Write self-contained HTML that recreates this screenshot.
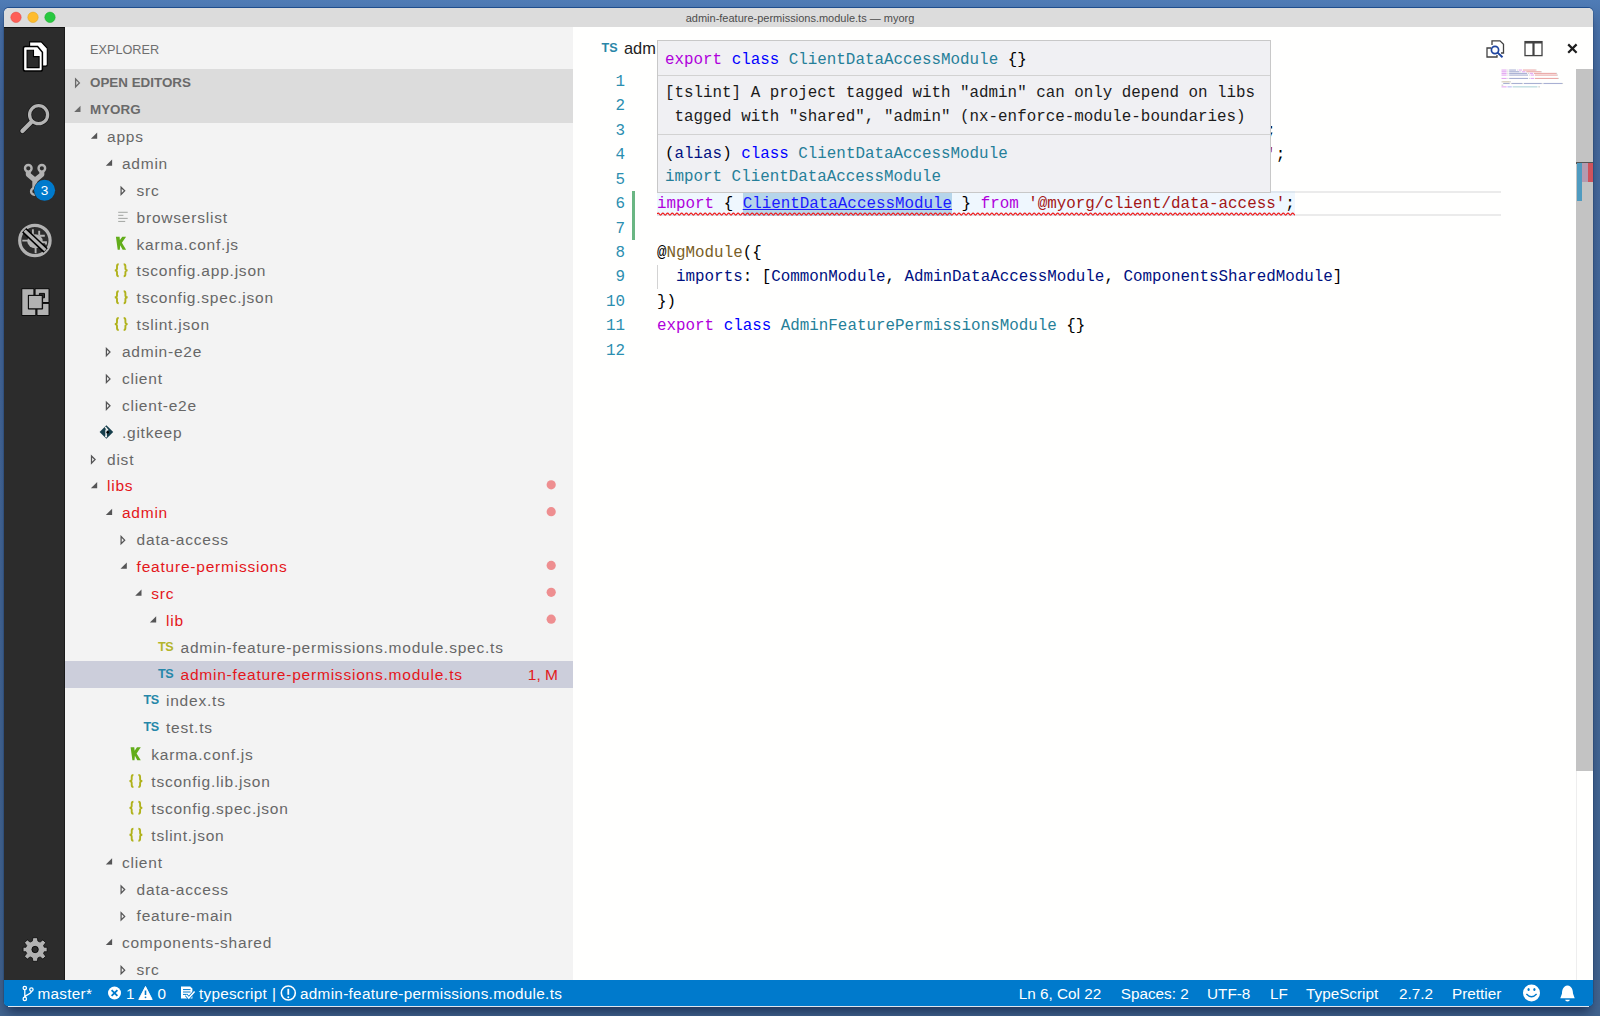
<!DOCTYPE html>
<html><head><meta charset="utf-8">
<style>
*{box-sizing:border-box;margin:0;padding:0}
html,body{width:1600px;height:1016px;overflow:hidden}
body{position:relative;background:linear-gradient(180deg,#4f7cb6 0%,#4a74ac 1.5%,#45699c 10%,#436796 60%,#41648f 100%);font-family:"Liberation Sans",sans-serif}
.abs{position:absolute}
#win{position:absolute;left:4px;top:8px;width:1589px;height:998px;border-radius:5px;overflow:hidden;background:#fff;box-shadow:0 -1px 0 0 rgba(10,60,130,.6),0 0 0 1px rgba(20,50,90,.22),0 9px 12px -3px rgba(0,10,40,.55)}
#title{position:absolute;left:4px;top:8px;width:1589px;height:19px;background:#dcdcdc;border-radius:5px 5px 0 0}
#titletxt{position:absolute;left:0;top:8.8px;width:1600px;height:19px;line-height:19px;text-align:center;font-size:11px;color:#4d4d4d}
#act{position:absolute;left:4px;top:27px;width:61px;height:953px;background:#2c2c2c;border-top:1px solid #111;border-right:1px solid #1a1a1a}
#side{position:absolute;left:65px;top:27px;width:508px;height:953px;background:#f3f3f3}
#editor{position:absolute;left:573px;top:27px;width:1020px;height:953px;background:#fffffe}
#status{position:absolute;left:4px;top:980px;width:1589px;height:26px;background:#007acc;border-radius:0 0 4px 4px}
.hdr{position:absolute;left:65px;width:508px;height:27px;background:#dcdcdc}
.hdrtxt{position:absolute;left:90px;height:27px;line-height:27px;font-size:13.4px;font-weight:700;color:#6a6a6a}
.lbl{position:absolute;height:27px;line-height:27px;font-size:15.5px;letter-spacing:0.78px;color:#676767;white-space:pre}
.lbl.red{color:#e4161b}
.deco{position:absolute;left:500px;width:58px;text-align:right;height:27px;line-height:27px;font-size:15.5px;color:#e21b1b}
.sel{position:absolute;left:65px;width:508px;height:27px;background:#cccedb}
.jsn{position:absolute;height:27px;line-height:27px;font-size:14.5px;font-family:"Liberation Mono",monospace;font-weight:700;color:#b6b62f;letter-spacing:-1.8px}
.ts{position:absolute;height:27px;line-height:26px;font-size:12.6px;font-weight:700;letter-spacing:-0.3px}
#svg{position:absolute;left:0;top:0}
.code{position:absolute;font-family:"Liberation Mono",monospace;font-size:15.87px;white-space:pre;height:24px;line-height:24px;color:#000}
.ln{position:absolute;left:573px;width:52px;text-align:right;font-family:"Liberation Mono",monospace;font-size:15.87px;height:24px;line-height:24px;color:#2b8eb0}
.lnk{color:#1a1aff;text-decoration:underline;text-underline-offset:0.6px;text-decoration-thickness:1.3px}
.dk{color:#1b1b1b}
.k{color:#af00db}.b{color:#0000ff}.t{color:#267f99}.s{color:#a31515}.v{color:#001080}.f{color:#795e26}
.st{position:absolute;top:980px;height:26px;line-height:26px;font-size:15.3px;color:#fff;white-space:pre}
</style></head><body>
<div id="win"></div>
<div id="title"></div>
<div id="titletxt">admin-feature-permissions.module.ts — myorg</div>
<div id="act"></div>
<div id="side"></div>
<div id="editor"></div>
<div id="status"></div>
<div class="abs" style="left:8px;top:1006px;width:1581px;height:1px;background:#dfe6f0"></div>

<!-- sidebar -->
<div class="abs" style="left:90px;top:37px;height:27px;line-height:27px;font-size:12.7px;color:#6f6f6f">EXPLORER</div>
<div class="hdr" style="top:69px"></div>
<div class="hdr" style="top:96px"></div>
<div class="hdrtxt" style="top:69px">OPEN EDITORS</div>
<div class="hdrtxt" style="top:96px">MYORG</div>
<div class="lbl" style="left:107.00px;top:123.00px">apps</div>
<div class="lbl" style="left:121.90px;top:149.88px">admin</div>
<div class="lbl" style="left:136.60px;top:176.75px">src</div>
<div class="lbl" style="left:136.60px;top:203.62px">browserslist</div>
<div class="lbl" style="left:136.60px;top:230.50px">karma.conf.js</div>
<div class="lbl" style="left:136.60px;top:257.38px">tsconfig.app.json</div>
<div class="lbl" style="left:136.60px;top:284.25px">tsconfig.spec.json</div>
<div class="lbl" style="left:136.60px;top:311.12px">tslint.json</div>
<div class="lbl" style="left:121.90px;top:338.00px">admin-e2e</div>
<div class="lbl" style="left:121.90px;top:364.88px">client</div>
<div class="lbl" style="left:121.90px;top:391.75px">client-e2e</div>
<div class="lbl" style="left:121.90px;top:418.62px">.gitkeep</div>
<div class="lbl" style="left:107.00px;top:445.50px">dist</div>
<div class="lbl red" style="left:107.00px;top:472.38px">libs</div>
<div class="lbl red" style="left:121.90px;top:499.25px">admin</div>
<div class="lbl" style="left:136.60px;top:526.12px">data-access</div>
<div class="lbl red" style="left:136.60px;top:553.00px">feature-permissions</div>
<div class="lbl red" style="left:151.30px;top:579.88px">src</div>
<div class="lbl red" style="left:166.00px;top:606.75px">lib</div>
<div class="lbl" style="left:180.50px;top:633.62px">admin-feature-permissions.module.spec.ts</div>
<div class="ts" style="left:157.90px;top:633.62px;color:#b3b52a">TS</div>
<div class="sel" style="top:660.80px"></div>
<div class="lbl red" style="left:180.50px;top:660.50px">admin-feature-permissions.module.ts</div>
<div class="deco" style="top:660.50px">1, M</div>
<div class="ts" style="left:157.90px;top:660.50px;color:#2687a9">TS</div>
<div class="lbl" style="left:166.00px;top:687.38px">index.ts</div>
<div class="ts" style="left:143.40px;top:687.38px;color:#2687a9">TS</div>
<div class="lbl" style="left:166.00px;top:714.25px">test.ts</div>
<div class="ts" style="left:143.40px;top:714.25px;color:#2687a9">TS</div>
<div class="lbl" style="left:151.30px;top:741.12px">karma.conf.js</div>
<div class="lbl" style="left:151.30px;top:768.00px">tsconfig.lib.json</div>
<div class="lbl" style="left:151.30px;top:794.88px">tsconfig.spec.json</div>
<div class="lbl" style="left:151.30px;top:821.75px">tslint.json</div>
<div class="lbl" style="left:121.90px;top:848.62px">client</div>
<div class="lbl" style="left:136.60px;top:875.50px">data-access</div>
<div class="lbl" style="left:136.60px;top:902.38px">feature-main</div>
<div class="lbl" style="left:121.90px;top:929.25px">components-shared</div>
<div class="lbl" style="left:136.60px;top:956.12px">src</div>

<!-- editor -->
<div class="abs" style="left:657px;top:191.25px;width:844px;height:24.45px;border-top:2.4px solid #ebebeb;border-bottom:2.4px solid #ebebeb"></div>
<div class="abs" style="left:657px;top:191.25px;width:637.97px;height:24.45px;background:rgba(173,214,255,0.2)"></div>
<div class="abs" style="left:742.70px;top:193.45px;width:209.48px;height:22.25px;background:#b6d5ea"></div>
<div class="abs" style="left:632px;top:191.25px;width:3px;height:48.40px;background:#6ab683"></div>
<div class="abs" style="left:657px;top:264.60px;width:1px;height:24.45px;background:#d3d3d3"></div>
<div class="ln" style="top:69.80px">1</div>
<div class="ln" style="top:94.25px">2</div>
<div class="ln" style="top:118.70px">3</div>
<div class="ln" style="top:143.15px">4</div>
<div class="ln" style="top:167.60px">5</div>
<div class="ln" style="top:192.05px">6</div>
<div class="ln" style="top:216.50px">7</div>
<div class="ln" style="top:240.95px">8</div>
<div class="ln" style="top:265.40px">9</div>
<div class="ln" style="top:289.85px">10</div>
<div class="ln" style="top:314.30px">11</div>
<div class="ln" style="top:338.75px">12</div>
<div class="code" style="left:657.0px;top:69.80px"><span class="k">import</span> { <span class="v">NgModule</span> } <span class="k">from</span> <span class="s">'@angular/core'</span>;</div>
<div class="code" style="left:657.0px;top:94.25px"><span class="k">import</span> { <span class="v">CommonModule</span> } <span class="k">from</span> <span class="s">'@angular/common'</span>;</div>
<div class="code" style="left:657.0px;top:118.70px"><span class="k">import</span> { <span class="v">AdminDataAccessModule</span> } <span class="k">from</span> <span class="s">'@myorg/admin/data-access'</span>;</div>
<div class="code" style="left:657.0px;top:143.15px"><span class="k">import</span> { <span class="v">ComponentsSharedModule</span> } <span class="k">from</span> <span class="s">'@myorg/components-shared'</span>;</div>
<div class="code" style="left:657.0px;top:192.05px"><span class="k">import</span> { <span class="lnk">ClientDataAccessModule</span> } <span class="k">from</span> <span class="s">'@myorg/client/data-access'</span>;</div>
<div class="code" style="left:657.0px;top:240.95px">@<span class="f">NgModule</span>({</div>
<div class="code" style="left:657.0px;top:265.40px">  <span class="v">imports</span>: [<span class="v">CommonModule</span>, <span class="v">AdminDataAccessModule</span>, <span class="v">ComponentsSharedModule</span>]</div>
<div class="code" style="left:657.0px;top:289.85px">})</div>
<div class="code" style="left:657.0px;top:314.30px"><span class="k">export</span> <span class="b">class</span> <span class="t">AdminFeaturePermissionsModule</span> {}</div>
<svg class="abs" style="left:657px;top:211.30px" width="638.0" height="6" viewBox="0 0 638.0 6"><path d="M0,3 Q1.18,1 2.35,3 Q3.53,5 4.70,3 Q5.88,1 7.05,3 Q8.23,5 9.40,3 Q10.58,1 11.75,3 Q12.93,5 14.10,3 Q15.28,1 16.45,3 Q17.62,5 18.80,3 Q19.98,1 21.15,3 Q22.33,5 23.50,3 Q24.68,1 25.85,3 Q27.02,5 28.20,3 Q29.38,1 30.55,3 Q31.73,5 32.90,3 Q34.07,1 35.25,3 Q36.42,5 37.60,3 Q38.77,1 39.95,3 Q41.12,5 42.30,3 Q43.48,1 44.65,3 Q45.83,5 47.00,3 Q48.18,1 49.35,3 Q50.53,5 51.70,3 Q52.88,1 54.05,3 Q55.23,5 56.40,3 Q57.58,1 58.75,3 Q59.93,5 61.10,3 Q62.28,1 63.45,3 Q64.63,5 65.80,3 Q66.98,1 68.15,3 Q69.33,5 70.50,3 Q71.68,1 72.85,3 Q74.03,5 75.20,3 Q76.38,1 77.55,3 Q78.73,5 79.90,3 Q81.08,1 82.25,3 Q83.43,5 84.60,3 Q85.78,1 86.95,3 Q88.13,5 89.30,3 Q90.48,1 91.65,3 Q92.83,5 94.00,3 Q95.18,1 96.35,3 Q97.53,5 98.70,3 Q99.88,1 101.05,3 Q102.23,5 103.40,3 Q104.58,1 105.75,3 Q106.93,5 108.10,3 Q109.28,1 110.45,3 Q111.63,5 112.80,3 Q113.98,1 115.15,3 Q116.33,5 117.50,3 Q118.68,1 119.85,3 Q121.03,5 122.20,3 Q123.38,1 124.55,3 Q125.73,5 126.90,3 Q128.08,1 129.25,3 Q130.43,5 131.60,3 Q132.78,1 133.95,3 Q135.13,5 136.30,3 Q137.48,1 138.65,3 Q139.83,5 141.00,3 Q142.18,1 143.35,3 Q144.53,5 145.70,3 Q146.88,1 148.05,3 Q149.23,5 150.40,3 Q151.58,1 152.75,3 Q153.93,5 155.10,3 Q156.28,1 157.45,3 Q158.62,5 159.80,3 Q160.97,1 162.15,3 Q163.32,5 164.50,3 Q165.67,1 166.85,3 Q168.02,5 169.20,3 Q170.37,1 171.55,3 Q172.72,5 173.90,3 Q175.07,1 176.25,3 Q177.42,5 178.60,3 Q179.77,1 180.95,3 Q182.12,5 183.30,3 Q184.47,1 185.65,3 Q186.82,5 188.00,3 Q189.17,1 190.35,3 Q191.52,5 192.70,3 Q193.87,1 195.05,3 Q196.22,5 197.40,3 Q198.57,1 199.75,3 Q200.92,5 202.10,3 Q203.27,1 204.45,3 Q205.62,5 206.80,3 Q207.97,1 209.15,3 Q210.32,5 211.50,3 Q212.67,1 213.85,3 Q215.02,5 216.20,3 Q217.37,1 218.55,3 Q219.72,5 220.90,3 Q222.07,1 223.25,3 Q224.42,5 225.60,3 Q226.77,1 227.95,3 Q229.12,5 230.30,3 Q231.47,1 232.65,3 Q233.82,5 235.00,3 Q236.17,1 237.35,3 Q238.52,5 239.70,3 Q240.87,1 242.05,3 Q243.22,5 244.40,3 Q245.57,1 246.75,3 Q247.92,5 249.10,3 Q250.27,1 251.45,3 Q252.62,5 253.80,3 Q254.97,1 256.15,3 Q257.32,5 258.50,3 Q259.67,1 260.85,3 Q262.02,5 263.20,3 Q264.37,1 265.55,3 Q266.72,5 267.90,3 Q269.07,1 270.25,3 Q271.42,5 272.60,3 Q273.77,1 274.95,3 Q276.12,5 277.30,3 Q278.47,1 279.65,3 Q280.82,5 282.00,3 Q283.17,1 284.35,3 Q285.52,5 286.70,3 Q287.87,1 289.05,3 Q290.22,5 291.40,3 Q292.57,1 293.75,3 Q294.92,5 296.10,3 Q297.27,1 298.45,3 Q299.62,5 300.80,3 Q301.97,1 303.15,3 Q304.32,5 305.50,3 Q306.67,1 307.85,3 Q309.02,5 310.20,3 Q311.37,1 312.55,3 Q313.72,5 314.90,3 Q316.07,1 317.25,3 Q318.42,5 319.60,3 Q320.77,1 321.95,3 Q323.12,5 324.30,3 Q325.47,1 326.65,3 Q327.82,5 329.00,3 Q330.17,1 331.35,3 Q332.52,5 333.70,3 Q334.87,1 336.05,3 Q337.22,5 338.40,3 Q339.57,1 340.75,3 Q341.92,5 343.10,3 Q344.27,1 345.45,3 Q346.62,5 347.80,3 Q348.97,1 350.15,3 Q351.32,5 352.50,3 Q353.67,1 354.85,3 Q356.02,5 357.20,3 Q358.37,1 359.55,3 Q360.72,5 361.90,3 Q363.07,1 364.25,3 Q365.42,5 366.60,3 Q367.77,1 368.95,3 Q370.12,5 371.30,3 Q372.47,1 373.65,3 Q374.82,5 376.00,3 Q377.17,1 378.35,3 Q379.52,5 380.70,3 Q381.87,1 383.05,3 Q384.22,5 385.40,3 Q386.57,1 387.75,3 Q388.92,5 390.10,3 Q391.27,1 392.45,3 Q393.62,5 394.80,3 Q395.97,1 397.15,3 Q398.32,5 399.50,3 Q400.67,1 401.85,3 Q403.02,5 404.20,3 Q405.37,1 406.55,3 Q407.72,5 408.90,3 Q410.07,1 411.25,3 Q412.42,5 413.60,3 Q414.77,1 415.95,3 Q417.12,5 418.30,3 Q419.47,1 420.65,3 Q421.82,5 423.00,3 Q424.17,1 425.35,3 Q426.52,5 427.70,3 Q428.87,1 430.05,3 Q431.22,5 432.40,3 Q433.57,1 434.75,3 Q435.92,5 437.10,3 Q438.27,1 439.45,3 Q440.62,5 441.80,3 Q442.97,1 444.15,3 Q445.32,5 446.50,3 Q447.67,1 448.85,3 Q450.02,5 451.20,3 Q452.37,1 453.55,3 Q454.72,5 455.90,3 Q457.07,1 458.25,3 Q459.42,5 460.60,3 Q461.77,1 462.95,3 Q464.12,5 465.30,3 Q466.47,1 467.65,3 Q468.82,5 470.00,3 Q471.17,1 472.35,3 Q473.52,5 474.70,3 Q475.87,1 477.05,3 Q478.22,5 479.40,3 Q480.57,1 481.75,3 Q482.92,5 484.10,3 Q485.27,1 486.45,3 Q487.62,5 488.80,3 Q489.97,1 491.15,3 Q492.32,5 493.50,3 Q494.67,1 495.85,3 Q497.02,5 498.20,3 Q499.37,1 500.55,3 Q501.72,5 502.90,3 Q504.07,1 505.25,3 Q506.42,5 507.60,3 Q508.77,1 509.95,3 Q511.12,5 512.30,3 Q513.47,1 514.65,3 Q515.82,5 517.00,3 Q518.17,1 519.35,3 Q520.52,5 521.70,3 Q522.87,1 524.05,3 Q525.22,5 526.40,3 Q527.57,1 528.75,3 Q529.92,5 531.10,3 Q532.27,1 533.45,3 Q534.62,5 535.80,3 Q536.97,1 538.15,3 Q539.32,5 540.50,3 Q541.67,1 542.85,3 Q544.02,5 545.20,3 Q546.37,1 547.55,3 Q548.72,5 549.90,3 Q551.07,1 552.25,3 Q553.42,5 554.60,3 Q555.77,1 556.95,3 Q558.12,5 559.30,3 Q560.47,1 561.65,3 Q562.82,5 564.00,3 Q565.17,1 566.35,3 Q567.52,5 568.70,3 Q569.87,1 571.05,3 Q572.22,5 573.40,3 Q574.57,1 575.75,3 Q576.92,5 578.10,3 Q579.27,1 580.45,3 Q581.62,5 582.80,3 Q583.97,1 585.15,3 Q586.32,5 587.50,3 Q588.67,1 589.85,3 Q591.02,5 592.20,3 Q593.37,1 594.55,3 Q595.72,5 596.90,3 Q598.07,1 599.25,3 Q600.42,5 601.60,3 Q602.77,1 603.95,3 Q605.12,5 606.30,3 Q607.48,1 608.65,3 Q609.83,5 611.00,3 Q612.18,1 613.35,3 Q614.53,5 615.70,3 Q616.88,1 618.05,3 Q619.23,5 620.40,3 Q621.58,1 622.75,3 Q623.93,5 625.10,3 Q626.28,1 627.45,3 Q628.63,5 629.80,3 Q630.98,1 632.15,3 Q633.33,5 634.50,3 Q635.68,1 636.85,3 Q638.03,5 639.20,3" fill="none" stroke="#f01c1c" stroke-width="1.25"/></svg>
<div class="abs" style="left:657px;top:40px;width:614px;height:153px;background:#f0f0f3;border:1px solid #c8c8c8"></div>
<div class="abs" style="left:658px;top:75px;width:612px;height:1px;background:#d2d2d2"></div>
<div class="abs" style="left:658px;top:134px;width:612px;height:1px;background:#d2d2d2"></div>
<div class="code" style="left:665px;top:48.20px"><span class="k">export</span> <span class="b">class</span> <span class="t">ClientDataAccessModule</span> {}</div>
<div class="code" style="left:665px;top:81.40px"><span class="dk">[tslint] A project tagged with "admin" can only depend on libs</span></div>
<div class="code" style="left:665px;top:105.40px"><span class="dk"> tagged with "shared", "admin" (nx-enforce-module-boundaries)</span></div>
<div class="code" style="left:665px;top:141.80px">(<span class="v">alias</span>) <span class="b">class</span> <span class="t">ClientDataAccessModule</span></div>
<div class="code" style="left:665px;top:165.00px"><span class="t">import ClientDataAccessModule</span></div>
<div class="abs" style="left:601.5px;top:38px;height:20px;line-height:20px;font-size:12.6px;font-weight:700;color:#2a86a8">TS</div>
<div class="abs" style="left:624px;top:38px;height:20px;line-height:20px;font-size:16.4px;color:#222">adm</div>
<div class="abs" style="left:1576px;top:69px;width:17px;height:702px;background:#c3c3c3"></div>
<div class="abs" style="left:1576px;top:771px;width:1px;height:209px;background:#eeeeee"></div>
<div class="abs" style="left:1576px;top:162px;width:17px;height:1.5px;background:#555"></div>
<div class="abs" style="left:1577px;top:163px;width:5px;height:38px;background:#4f9bc0"></div>
<div class="abs" style="left:1582px;top:163px;width:6px;height:19px;background:#b49bb0"></div>
<div class="abs" style="left:1588px;top:163px;width:5px;height:19px;background:#d0535c"></div>
<svg class="abs" style="left:0;top:0" width="1600" height="120"><rect x="1501.50" y="69.50" width="5.13" height="1.1" fill="#c040e0" opacity="0.45"/><rect x="1507.48" y="69.50" width="0.85" height="1.1" fill="#909090" opacity="0.45"/><rect x="1509.19" y="69.50" width="6.84" height="1.1" fill="#4050a0" opacity="0.45"/><rect x="1516.89" y="69.50" width="0.85" height="1.1" fill="#909090" opacity="0.45"/><rect x="1518.60" y="69.50" width="3.42" height="1.1" fill="#c040e0" opacity="0.45"/><rect x="1522.88" y="69.50" width="12.82" height="1.1" fill="#d04040" opacity="0.45"/><rect x="1535.70" y="69.50" width="0.85" height="1.1" fill="#909090" opacity="0.45"/><rect x="1501.50" y="71.18" width="5.13" height="1.1" fill="#c040e0" opacity="0.45"/><rect x="1507.48" y="71.18" width="0.85" height="1.1" fill="#909090" opacity="0.45"/><rect x="1509.19" y="71.18" width="10.26" height="1.1" fill="#4050a0" opacity="0.45"/><rect x="1520.31" y="71.18" width="0.85" height="1.1" fill="#909090" opacity="0.45"/><rect x="1522.02" y="71.18" width="3.42" height="1.1" fill="#c040e0" opacity="0.45"/><rect x="1526.30" y="71.18" width="14.54" height="1.1" fill="#d04040" opacity="0.45"/><rect x="1540.83" y="71.18" width="0.85" height="1.1" fill="#909090" opacity="0.45"/><rect x="1501.50" y="72.86" width="5.13" height="1.1" fill="#c040e0" opacity="0.45"/><rect x="1507.48" y="72.86" width="0.85" height="1.1" fill="#909090" opacity="0.45"/><rect x="1509.19" y="72.86" width="17.95" height="1.1" fill="#4050a0" opacity="0.45"/><rect x="1528.01" y="72.86" width="0.85" height="1.1" fill="#909090" opacity="0.45"/><rect x="1529.71" y="72.86" width="3.42" height="1.1" fill="#c040e0" opacity="0.45"/><rect x="1533.99" y="72.86" width="22.23" height="1.1" fill="#d04040" opacity="0.45"/><rect x="1556.22" y="72.86" width="0.85" height="1.1" fill="#909090" opacity="0.45"/><rect x="1501.50" y="74.54" width="5.13" height="1.1" fill="#c040e0" opacity="0.45"/><rect x="1507.48" y="74.54" width="0.85" height="1.1" fill="#909090" opacity="0.45"/><rect x="1509.19" y="74.54" width="18.81" height="1.1" fill="#4050a0" opacity="0.45"/><rect x="1528.86" y="74.54" width="0.85" height="1.1" fill="#909090" opacity="0.45"/><rect x="1530.57" y="74.54" width="3.42" height="1.1" fill="#c040e0" opacity="0.45"/><rect x="1534.85" y="74.54" width="22.23" height="1.1" fill="#d04040" opacity="0.45"/><rect x="1557.08" y="74.54" width="0.85" height="1.1" fill="#909090" opacity="0.45"/><rect x="1501.50" y="77.90" width="5.13" height="1.1" fill="#c040e0" opacity="0.45"/><rect x="1507.48" y="77.90" width="0.85" height="1.1" fill="#909090" opacity="0.45"/><rect x="1509.19" y="77.90" width="18.81" height="1.1" fill="#4050a0" opacity="0.45"/><rect x="1528.86" y="77.90" width="0.85" height="1.1" fill="#909090" opacity="0.45"/><rect x="1530.57" y="77.90" width="3.42" height="1.1" fill="#c040e0" opacity="0.45"/><rect x="1534.85" y="77.90" width="23.09" height="1.1" fill="#d04040" opacity="0.45"/><rect x="1557.93" y="77.90" width="0.85" height="1.1" fill="#909090" opacity="0.45"/><rect x="1501.50" y="81.26" width="0.85" height="1.1" fill="#909090" opacity="0.45"/><rect x="1502.36" y="81.26" width="6.84" height="1.1" fill="#9a8050" opacity="0.45"/><rect x="1509.19" y="81.26" width="1.71" height="1.1" fill="#909090" opacity="0.45"/><rect x="1503.21" y="82.94" width="5.98" height="1.1" fill="#4050a0" opacity="0.45"/><rect x="1509.19" y="82.94" width="0.85" height="1.1" fill="#909090" opacity="0.45"/><rect x="1510.90" y="82.94" width="0.85" height="1.1" fill="#909090" opacity="0.45"/><rect x="1511.76" y="82.94" width="10.26" height="1.1" fill="#4050a0" opacity="0.45"/><rect x="1522.02" y="82.94" width="0.85" height="1.1" fill="#909090" opacity="0.45"/><rect x="1523.73" y="82.94" width="17.95" height="1.1" fill="#4050a0" opacity="0.45"/><rect x="1541.68" y="82.94" width="0.85" height="1.1" fill="#909090" opacity="0.45"/><rect x="1543.39" y="82.94" width="18.81" height="1.1" fill="#4050a0" opacity="0.45"/><rect x="1562.20" y="82.94" width="0.85" height="1.1" fill="#909090" opacity="0.45"/><rect x="1501.50" y="84.62" width="1.71" height="1.1" fill="#909090" opacity="0.45"/><rect x="1501.50" y="86.30" width="5.13" height="1.1" fill="#c040e0" opacity="0.45"/><rect x="1507.48" y="86.30" width="4.28" height="1.1" fill="#6060f0" opacity="0.45"/><rect x="1512.62" y="86.30" width="24.79" height="1.1" fill="#50a0b0" opacity="0.45"/><rect x="1538.27" y="86.30" width="1.71" height="1.1" fill="#909090" opacity="0.45"/></svg>

<!-- status -->
<div class="st" style="left:37.5px;top:981px;letter-spacing:0.28px">master*</div>
<div class="st" style="left:126px;top:981px;">1</div>
<div class="st" style="left:157.5px;top:981px;">0</div>
<div class="st" style="left:199px;top:981px;letter-spacing:0.25px">typescript</div>
<div class="st" style="left:272px;top:981px;">|</div>
<div class="st" style="left:300px;top:981px;letter-spacing:0.3px">admin-feature-permissions.module.ts</div>
<div class="st" style="left:1018.7px;top:981px;">Ln 6, Col 22</div>
<div class="st" style="left:1120.7px;top:981px;">Spaces: 2</div>
<div class="st" style="left:1207px;top:981px;">UTF-8</div>
<div class="st" style="left:1270px;top:981px;">LF</div>
<div class="st" style="left:1306px;top:981px;">TypeScript</div>
<div class="st" style="left:1399px;top:981px;">2.7.2</div>
<div class="st" style="left:1452px;top:981px;">Prettier</div>

<svg id="svg" width="1600" height="1016" viewBox="0 0 1600 1016">
<!-- traffic lights -->
<circle cx="16" cy="17.3" r="5.2" fill="#fe5f57" stroke="#e2463f" stroke-width="0.5"/>
<circle cx="33" cy="17.3" r="5.2" fill="#febc2e" stroke="#e1a116" stroke-width="0.5"/>
<circle cx="50" cy="17.3" r="5.2" fill="#28c840" stroke="#1aab29" stroke-width="0.5"/>
<!-- header twisties -->
<path d="M75.6,79 L79.4,82.9 L75.6,86.8 Z" fill="none" stroke="#6a6a6a" stroke-width="1.3"/>
<path d="M74.2,112 L80.5,112 L80.5,105.7 Z" fill="#6a6a6a"/>
<path d="M90.90,138.84 L97.20,138.84 L97.20,132.54 Z" fill="#555556"/>
<path d="M105.80,165.71 L112.10,165.71 L112.10,159.41 Z" fill="#555556"/>
<path d="M121.10,187.19 L124.70,190.79 L121.10,194.39 Z" fill="none" stroke="#555556" stroke-width="1.25" stroke-linejoin="miter"/>
<rect x="118.20" y="211.76" width="9.5" height="1.1" fill="#a9aca9"/>
<rect x="118.20" y="214.81" width="5.2" height="1.1" fill="#a9aca9"/>
<rect x="118.20" y="217.86" width="9.5" height="1.1" fill="#a9aca9"/>
<rect x="118.20" y="220.91" width="7" height="1.1" fill="#a9aca9"/>
<path transform="translate(115.90,236.64)" d="M0,0 H3.7 L4,3.4 L6.4,0 H10.2 L6,6.2 L10.2,13 H6.7 L4.3,8.6 L3.9,13 H1.8 Z" fill="#62ad1a"/>
<path d="M118.70,264.31 C117.50,264.31 117.00,264.91 117.00,266.31 L117.00,268.51 C117.00,269.51 116.30,270.21 114.90,270.41 C116.30,270.61 117.00,271.31 117.00,272.31 L117.00,274.31 C117.00,275.71 117.50,276.31 118.70,276.31 M123.70,264.31 C124.90,264.31 125.40,264.91 125.40,266.31 L125.40,268.51 C125.40,269.51 126.10,270.21 127.50,270.41 C126.10,270.61 125.40,271.31 125.40,272.31 L125.40,274.31 C125.40,275.71 124.90,276.31 123.70,276.31" fill="none" stroke="#b0b21c" stroke-width="1.9" stroke-linejoin="miter"/>
<path d="M118.70,291.19 C117.50,291.19 117.00,291.79 117.00,293.19 L117.00,295.39 C117.00,296.39 116.30,297.09 114.90,297.29 C116.30,297.49 117.00,298.19 117.00,299.19 L117.00,301.19 C117.00,302.59 117.50,303.19 118.70,303.19 M123.70,291.19 C124.90,291.19 125.40,291.79 125.40,293.19 L125.40,295.39 C125.40,296.39 126.10,297.09 127.50,297.29 C126.10,297.49 125.40,298.19 125.40,299.19 L125.40,301.19 C125.40,302.59 124.90,303.19 123.70,303.19" fill="none" stroke="#b0b21c" stroke-width="1.9" stroke-linejoin="miter"/>
<path d="M118.70,318.06 C117.50,318.06 117.00,318.66 117.00,320.06 L117.00,322.26 C117.00,323.26 116.30,323.96 114.90,324.16 C116.30,324.36 117.00,325.06 117.00,326.06 L117.00,328.06 C117.00,329.46 117.50,330.06 118.70,330.06 M123.70,318.06 C124.90,318.06 125.40,318.66 125.40,320.06 L125.40,322.26 C125.40,323.26 126.10,323.96 127.50,324.16 C126.10,324.36 125.40,325.06 125.40,326.06 L125.40,328.06 C125.40,329.46 124.90,330.06 123.70,330.06" fill="none" stroke="#b0b21c" stroke-width="1.9" stroke-linejoin="miter"/>
<path d="M106.40,348.44 L110.00,352.04 L106.40,355.64 Z" fill="none" stroke="#555556" stroke-width="1.25" stroke-linejoin="miter"/>
<path d="M106.40,375.31 L110.00,378.91 L106.40,382.51 Z" fill="none" stroke="#555556" stroke-width="1.25" stroke-linejoin="miter"/>
<path d="M106.40,402.19 L110.00,405.79 L106.40,409.39 Z" fill="none" stroke="#555556" stroke-width="1.25" stroke-linejoin="miter"/>
<g transform="translate(106.40,431.96)"><path d="M0,-6.8 L6.8,0 L0,6.8 L-6.8,0 Z" fill="#163e4c"/><path d="M-1.2,-5 L1.6,-1.6 M-0.3,-2.5 V4.8" stroke="#f3f3f3" stroke-width="1.5" fill="none"/><circle cx="1.3" cy="0.3" r="1.3" fill="#000"/><circle cx="-0.3" cy="4.6" r="1" fill="#f3f3f3"/></g>
<path d="M91.50,455.94 L95.10,459.54 L91.50,463.14 Z" fill="none" stroke="#555556" stroke-width="1.25" stroke-linejoin="miter"/>
<circle cx="551.2" cy="484.81" r="4.6" fill="#ee8e90"/>
<path d="M90.90,488.21 L97.20,488.21 L97.20,481.91 Z" fill="#555556"/>
<circle cx="551.2" cy="511.69" r="4.6" fill="#ee8e90"/>
<path d="M105.80,515.09 L112.10,515.09 L112.10,508.79 Z" fill="#555556"/>
<path d="M121.10,536.56 L124.70,540.16 L121.10,543.76 Z" fill="none" stroke="#555556" stroke-width="1.25" stroke-linejoin="miter"/>
<circle cx="551.2" cy="565.44" r="4.6" fill="#ee8e90"/>
<path d="M120.50,568.84 L126.80,568.84 L126.80,562.54 Z" fill="#555556"/>
<circle cx="551.2" cy="592.31" r="4.6" fill="#ee8e90"/>
<path d="M135.20,595.71 L141.50,595.71 L141.50,589.41 Z" fill="#555556"/>
<circle cx="551.2" cy="619.19" r="4.6" fill="#ee8e90"/>
<path d="M149.90,622.59 L156.20,622.59 L156.20,616.29 Z" fill="#555556"/>
<path transform="translate(130.60,747.26)" d="M0,0 H3.7 L4,3.4 L6.4,0 H10.2 L6,6.2 L10.2,13 H6.7 L4.3,8.6 L3.9,13 H1.8 Z" fill="#62ad1a"/>
<path d="M133.40,774.94 C132.20,774.94 131.70,775.54 131.70,776.94 L131.70,779.14 C131.70,780.14 131.00,780.84 129.60,781.04 C131.00,781.24 131.70,781.94 131.70,782.94 L131.70,784.94 C131.70,786.34 132.20,786.94 133.40,786.94 M138.40,774.94 C139.60,774.94 140.10,775.54 140.10,776.94 L140.10,779.14 C140.10,780.14 140.80,780.84 142.20,781.04 C140.80,781.24 140.10,781.94 140.10,782.94 L140.10,784.94 C140.10,786.34 139.60,786.94 138.40,786.94" fill="none" stroke="#b0b21c" stroke-width="1.9" stroke-linejoin="miter"/>
<path d="M133.40,801.81 C132.20,801.81 131.70,802.41 131.70,803.81 L131.70,806.01 C131.70,807.01 131.00,807.71 129.60,807.91 C131.00,808.11 131.70,808.81 131.70,809.81 L131.70,811.81 C131.70,813.21 132.20,813.81 133.40,813.81 M138.40,801.81 C139.60,801.81 140.10,802.41 140.10,803.81 L140.10,806.01 C140.10,807.01 140.80,807.71 142.20,807.91 C140.80,808.11 140.10,808.81 140.10,809.81 L140.10,811.81 C140.10,813.21 139.60,813.81 138.40,813.81" fill="none" stroke="#b0b21c" stroke-width="1.9" stroke-linejoin="miter"/>
<path d="M133.40,828.69 C132.20,828.69 131.70,829.29 131.70,830.69 L131.70,832.89 C131.70,833.89 131.00,834.59 129.60,834.79 C131.00,834.99 131.70,835.69 131.70,836.69 L131.70,838.69 C131.70,840.09 132.20,840.69 133.40,840.69 M138.40,828.69 C139.60,828.69 140.10,829.29 140.10,830.69 L140.10,832.89 C140.10,833.89 140.80,834.59 142.20,834.79 C140.80,834.99 140.10,835.69 140.10,836.69 L140.10,838.69 C140.10,840.09 139.60,840.69 138.40,840.69" fill="none" stroke="#b0b21c" stroke-width="1.9" stroke-linejoin="miter"/>
<path d="M105.80,864.46 L112.10,864.46 L112.10,858.16 Z" fill="#555556"/>
<path d="M121.10,885.94 L124.70,889.54 L121.10,893.14 Z" fill="none" stroke="#555556" stroke-width="1.25" stroke-linejoin="miter"/>
<path d="M121.10,912.81 L124.70,916.41 L121.10,920.01 Z" fill="none" stroke="#555556" stroke-width="1.25" stroke-linejoin="miter"/>
<path d="M105.80,945.09 L112.10,945.09 L112.10,938.79 Z" fill="#555556"/>
<path d="M121.10,966.56 L124.70,970.16 L121.10,973.76 Z" fill="none" stroke="#555556" stroke-width="1.25" stroke-linejoin="miter"/>
<!-- files icon -->
<g>
<path d="M29.6,41.9 H41.3 L47.3,48.3 V64.4 Q47.3,66.1 45.6,66.1 H29.6 Z" fill="#fff" stroke="#000" stroke-width="1.1"/>
<path d="M25.2,46.6 H37.6 L42.4,52.2 V69.3 Q42.4,71.1 40.6,71.1 H25.2 Q23.4,71.1 23.4,69.3 V48.4 Q23.4,46.6 25.2,46.6 Z" fill="#fff" stroke="#000" stroke-width="1.5"/>
<path d="M27.1,50.3 H33.5 V56.6 H39.1 V67.6 H27.1 Z" fill="#2c2c2c" stroke="#000" stroke-width="1.1"/>
</g>
<!-- search -->
<g fill="none">
<circle cx="38.6" cy="114.7" r="9" stroke="#000" stroke-width="4.6" opacity="0.5"/>
<path d="M31.6,121.7 L22.4,131" stroke="#000" stroke-width="5.6" stroke-linecap="round" opacity="0.5"/>
<circle cx="38.6" cy="114.7" r="9" stroke="#b4b4b4" stroke-width="3.3"/>
<path d="M31.6,121.7 L22.4,131" stroke="#b4b4b4" stroke-width="4.2" stroke-linecap="round"/>
</g>
<!-- git -->
<g fill="none" stroke="#b2b2b2">
<circle cx="28.3" cy="168.3" r="3.3" stroke-width="2.4"/>
<circle cx="41.85" cy="168.3" r="3.3" stroke-width="2.4"/>
<circle cx="34.4" cy="191.4" r="3.3" stroke-width="2.4"/>
<path d="M28.3,171 V174.6 L34.8,180 V188.5" stroke-width="5" stroke-linejoin="round"/>
<path d="M41.85,171 V174.6 L35.3,180" stroke-width="5" stroke-linejoin="round"/>
</g>
<circle cx="44.6" cy="190.3" r="10.8" fill="#2c2c2c"/>
<circle cx="44.6" cy="190.3" r="10.5" fill="#007acc"/>
<text x="44.6" y="195" font-family="Liberation Sans" font-size="13.6" fill="#fff" text-anchor="middle">3</text>
<!-- debug -->
<g>
<circle cx="34.9" cy="240.5" r="15.2" fill="none" stroke="#b2b2b2" stroke-width="3.2"/>
<ellipse cx="35.1" cy="241.2" rx="7.6" ry="7" fill="#b2b2b2"/>
<path d="M22.3,240.6 H28.6 V243.5" fill="none" stroke="#b2b2b2" stroke-width="1.9"/>
<path d="M35.6,246 V253.2" fill="none" stroke="#b2b2b2" stroke-width="1.9"/>
<path d="M32.9,229.3 V235" fill="none" stroke="#b2b2b2" stroke-width="1.9"/>
<path d="M39.2,230.8 V235.5 M39.5,235.8 H44.8 M40.5,242.2 H46 V244.5" fill="none" stroke="#b2b2b2" stroke-width="1.9"/>
<path d="M24.2,230.2 L45.6,250.4" stroke="#000" stroke-width="6.2"/>
<path d="M24.6,230.6 L45.4,250.2" stroke="#b2b2b2" stroke-width="3.1"/>
</g>
<!-- extensions -->
<g fill="#b2b2b2" stroke="#000" stroke-width="0.9">
<path d="M21.8,288.7 H33.9 V295.4 H28.4 V308.9 H35.8 V315.5 H21.8 Z"/>
<path d="M35.1,288.7 H49 V302.5 H42.6 V297.8 H44.5 V293.4 H39.4 V295.4 H35.1 Z"/>
<path d="M37,308.9 H42.6 V303.4 H49 V315.5 H37 Z"/>
<rect x="28.4" y="295.4" width="13.8" height="13.4"/>
</g>
<!-- gear -->
<g transform="translate(35.1,949.5)">
<path fill="#b2b2b2" stroke="#000" stroke-width="0.7" d="M-2.2,-11.8 H2.2 L2.8,-8.4 L5.0,-7.4 L7.8,-9.6 L10.6,-6.8 L8.4,-4.0 L9.2,-2.2 L12,-2.2 V2.2 L9.2,2.2 L8.4,4.0 L10.6,6.8 L7.8,9.6 L5.0,7.4 L2.8,8.4 L2.2,11.8 H-2.2 L-2.8,8.4 L-5.0,7.4 L-7.8,9.6 L-10.6,6.8 L-8.4,4.0 L-9.2,2.2 L-12,2.2 V-2.2 L-9.2,-2.2 L-8.4,-4.0 L-10.6,-6.8 L-7.8,-9.6 L-5.0,-7.4 L-2.8,-8.4 Z"/>
<circle r="3.2" fill="#2c2c2c" stroke="#000" stroke-width="0.8"/>
</g>
<!-- status bar icons -->
<g fill="none" stroke="#fff" stroke-width="1.3">
<circle cx="24.8" cy="988" r="1.7"/>
<circle cx="24.8" cy="998.9" r="1.7"/>
<circle cx="31.4" cy="989.6" r="1.7"/>
<path d="M24.8,989.7 V997.2 M31.4,991.3 C31.4,994.5 25.5,994 24.9,997.2"/>
</g>
<g>
<circle cx="114.5" cy="993" r="6.5" fill="#fff"/>
<path d="M111.6,990.1 L117.4,995.9 M117.4,990.1 L111.6,995.9" stroke="#007acc" stroke-width="1.8"/>
<path d="M145.5,986.5 L152.2,999.5 H138.8 Z" fill="#fff" stroke="#fff" stroke-width="1" stroke-linejoin="round"/>
<path d="M145.5,990.5 V995" stroke="#007acc" stroke-width="1.6"/>
<circle cx="145.5" cy="997.3" r="0.9" fill="#007acc"/>
</g>
<g>
<path d="M181,986.4 H190.2 L192.4,988.6 V998.6 H181 Z" fill="#fff"/>
<path d="M183,989.6 H190.5 M183,992 H190.5 M183,994.4 H187.5" stroke="#007acc" stroke-width="1"/>
<path d="M186.2,995 L188.8,998 L194.6,991.5" fill="none" stroke="#007acc" stroke-width="3.2"/>
<path d="M186.2,995 L188.8,998 L194.6,991.5" fill="none" stroke="#fff" stroke-width="1.5"/>
</g>
<g>
<circle cx="288.3" cy="993" r="7" fill="none" stroke="#fff" stroke-width="1.6"/>
<path d="M288.3,988.8 V994.8" stroke="#fff" stroke-width="1.8"/>
<circle cx="288.3" cy="997.3" r="1" fill="#fff"/>
</g>
<!-- smiley -->
<g>
<circle cx="1531.5" cy="993" r="8.5" fill="#fff"/>
<ellipse cx="1528.6" cy="989.5" rx="1.1" ry="1.5" fill="#007acc"/>
<ellipse cx="1534.4" cy="989.5" rx="1.1" ry="1.5" fill="#007acc"/>
<path d="M1526.4,994 Q1531.5,999.5 1536.6,994" fill="none" stroke="#007acc" stroke-width="1.4"/>
</g>
<!-- bell -->
<path d="M1567.5,985.6 C1563,986 1562,990.5 1562,993.5 L1560.3,998.2 H1574.7 L1573,993.5 C1573,990.5 1572,986 1567.5,985.6 Z" fill="#fff"/>
<path d="M1565.2,999.8 H1569.8 A2.3,1.8 0 0 1 1565.2,999.8 Z" fill="#fff"/>
<!-- editor actions -->
<g fill="none" stroke="#424242" stroke-width="1.3">
<path d="M1491,48 H1487 V57 H1497 V55"/>
<path d="M1492,45 V40.8 H1500 L1503.5,44.3 V53 H1501"/>
</g>
<circle cx="1495" cy="50" r="3.6" fill="none" stroke="#1f45a0" stroke-width="1.7"/>
<path d="M1497.6,52.6 L1502.5,57.3" stroke="#1f45a0" stroke-width="2"/>
<g>
<rect x="1525" y="41.6" width="17" height="14" fill="none" stroke="#424242" stroke-width="1.3"/>
<rect x="1525" y="41" width="17" height="2.5" fill="#424242"/>
<path d="M1533.5,42 V55.6" stroke="#424242" stroke-width="2.2"/>
</g>
<path d="M1568.2,44.4 L1576.6,52.8 M1576.6,44.4 L1568.2,52.8" stroke="#1e1e1e" stroke-width="2.2"/>

</svg>
</body></html>
